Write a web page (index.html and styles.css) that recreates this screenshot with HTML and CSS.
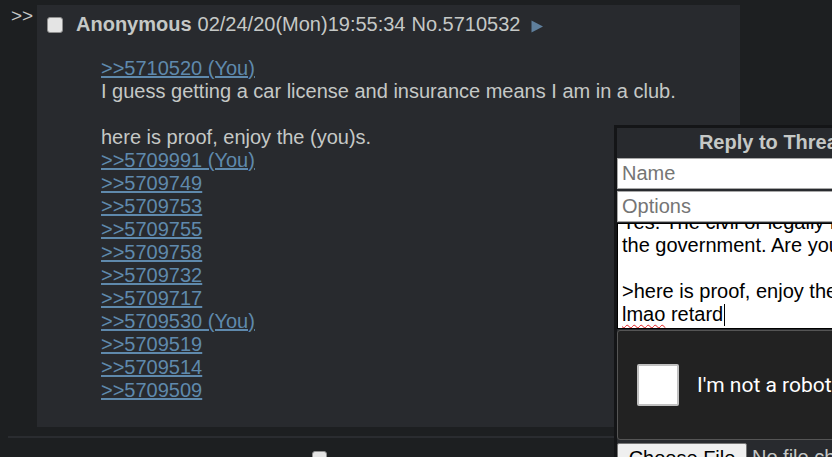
FILE: index.html
```html
<!DOCTYPE html>
<html>
<head>
<meta charset="utf-8">
<link rel="stylesheet" href="styles.css">
</head>
<body>
<div class="thread">
  <div class="arrows">&gt;&gt;</div>
  <div class="post">
    <div class="head">
      <span class="cb"></span>
      <span class="name">Anonymous</span>
      <span class="date">02/24/20(Mon)19:55:34</span>
      <span class="num">No.5710532</span>
      <svg class="menu" width="12" height="13" viewBox="0 0 12 13"><polygon points="0.5,0.5 12,6.5 0.5,12.5" fill="#5f7f9c"/></svg>
    </div>
    <div class="msg">
      <a class="ql" href="#">&gt;&gt;5710520 (You)</a><br>
      I guess getting a car license and insurance means I am in a club.<br>
      <br>
      here is proof, enjoy the (you)s.<br>
      <a class="ql" href="#">&gt;&gt;5709991 (You)</a><br>
      <a class="ql" href="#">&gt;&gt;5709749</a><br>
      <a class="ql" href="#">&gt;&gt;5709753</a><br>
      <a class="ql" href="#">&gt;&gt;5709755</a><br>
      <a class="ql" href="#">&gt;&gt;5709758</a><br>
      <a class="ql" href="#">&gt;&gt;5709732</a><br>
      <a class="ql" href="#">&gt;&gt;5709717</a><br>
      <a class="ql" href="#">&gt;&gt;5709530 (You)</a><br>
      <a class="ql" href="#">&gt;&gt;5709519</a><br>
      <a class="ql" href="#">&gt;&gt;5709514</a><br>
      <a class="ql" href="#">&gt;&gt;5709509</a>
    </div>
  </div>
</div>
<div class="rule"></div>
<div class="next"><span class="cb2"></span></div>

<div class="qr">
  <div class="qr-title">Reply to Thread</div>
  <div class="field">Name</div>
  <div class="field">Options</div>
  <div class="ta">
    <div class="ta-line">Yes. The civil or legally recognized by</div>
    <div class="ta-line">the government. Are you</div>
    <div class="ta-line">&nbsp;</div>
    <div class="ta-line">&gt;here is proof, enjoy the (you)s.</div>
    <div class="ta-line"><span class="spell">lmao</span> retard<span class="caret"></span></div>
  </div>
  <div class="captcha">
    <span class="rc-box"></span>
    <span class="rc-text">I'm not a robot</span>
  </div>
  <div class="file-row">
    <span class="file-btn">Choose File</span>
    <span class="file-none">No file chosen</span>
  </div>
</div>
</body>
</html>
```

FILE: styles.css
```css
html, body {
  margin: 0;
  padding: 0;
  background: #1d1f21;
  height: 100%;
  overflow: hidden;
}
body {
  font-family: "Liberation Sans", Arial, sans-serif;
  font-size: 20px;
  color: #c5c8c6;
  position: relative;
}
.thread {
  display: flex;
  padding: 5px 0 0 11px;
}
.arrows {
  width: 26px;
  line-height: 21px;
  font-size: 19px;
  color: #c5c8c6;
}
.post {
  width: 703px;
  height: 422px;
  box-sizing: border-box;
  background: #282a2e;
  padding: 8px 0 0 10px;
}
.head {
  display: flex;
  align-items: center;
  height: 23px;
  line-height: 23px;
  white-space: nowrap;
}
.cb {
  display: inline-block;
  width: 14px;
  height: 14px;
  border: 1px solid #8f8f8f;
  border-radius: 3px;
  background: #e4e4e4;
  margin-right: 13px;
}
.name {
  font-weight: bold;
  color: #c5c8c6;
  margin-right: 6px;
}
.date { margin-right: 6px; }
.num { margin-right: 11px; }
.menu { margin-top: 3px; }
.msg {
  margin: 21px 0 0 54px;
  line-height: 23px;
}
.ql {
  color: #5f89ac;
  text-decoration: underline;
}
.rule {
  height: 2px;
  background: #2a2c30;
  margin: 9px 0 0 8px;
}
.next {
  padding: 13px 0 0 312px;
}
.cb2 {
  display: block;
  width: 13px;
  height: 13px;
  border: 1px solid #8f8f8f;
  border-radius: 3px;
  background: #e4e4e4;
}

/* quick reply */
.qr {
  position: absolute;
  left: 614px;
  top: 125px;
  width: 315px;
  border: 3px solid #141517;
  border-bottom: 0;
  background: #282a2e;
}
.qr-title {
  height: 30px;
  line-height: 28px;
  text-align: center;
  font-weight: bold;
  color: #c5c8c6;
  white-space: nowrap;
}
.field {
  height: 29px;
  line-height: 29px;
  border: 1px solid #a8a8a8;
  background: #fff;
  color: #757575;
  padding-left: 4px;
  margin-bottom: 2px;
}
.ta {
  height: 102px;
  border: 1px solid #000;
  background: #fff;
  color: #000;
  overflow: hidden;
  display: flex;
  flex-direction: column;
  justify-content: flex-end;
  padding: 0 4px 2px;
  line-height: 23px;
  white-space: nowrap;
  margin-top: -1px;
}
.spell {
  text-decoration: underline wavy #e02020;
  text-decoration-thickness: 1px;
  text-underline-offset: 3px;
}
.caret {
  display: inline-block;
  width: 1px;
  height: 22px;
  background: #000;
  vertical-align: -5px;
  margin-left: 1px;
}
.captcha {
  height: 110px;
  box-sizing: border-box;
  margin-top: 1px;
  border: 1px solid #555;
  border-radius: 3px;
  background: #222;
  display: flex;
  align-items: center;
  padding-left: 19px;
  white-space: nowrap;
}
.rc-box {
  flex: none;
  width: 38px;
  height: 38px;
  border: 2px solid #c1c1c1;
  border-radius: 2px;
  background: #fff;
  margin-right: 18px;
}
.rc-text {
  font-family: Roboto, "Liberation Sans", sans-serif;
  font-size: 21px;
  color: #fff;
}
.file-row {
  display: flex;
  align-items: flex-start;
  margin-top: 3px;
  white-space: nowrap;
}
.file-btn {
  flex: none;
  display: inline-block;
  width: 130px;
  height: 30px;
  box-sizing: border-box;
  line-height: 28px;
  text-align: center;
  background: #efefef;
  border: 1px solid #767676;
  border-radius: 2px;
  color: #000;
  margin-right: 5px;
}
.file-none {
  line-height: 28px;
  color: #c5c8c6;
}
```
